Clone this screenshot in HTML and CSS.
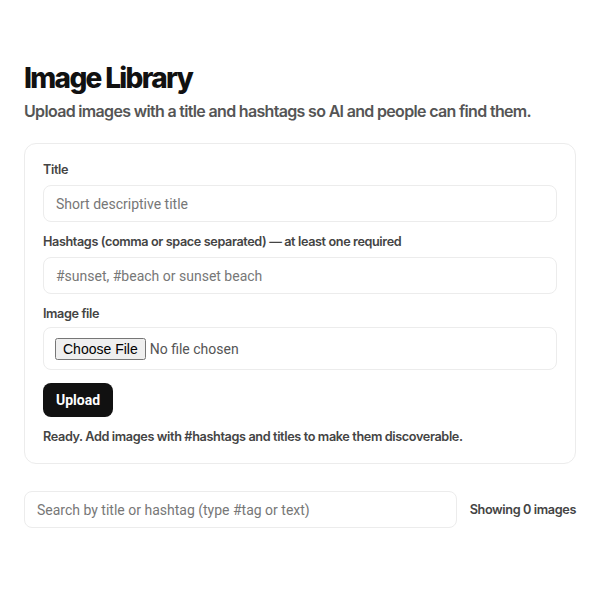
FILE: index.html
```html
<!DOCTYPE html>
<html lang="en">
<head>
<meta charset="utf-8">
<title>Image Library</title>
<link rel="stylesheet" href="styles.css">
</head>
<body>
<main class="page">
  <h1 class="title">Image Library</h1>
  <p class="subtitle">Upload images with a title and hashtags so AI and people can find them.</p>

  <form class="card">
    <div class="field">
      <label class="label" for="t">Title</label>
      <input class="input" id="t" type="text" placeholder="Short descriptive title">
    </div>
    <div class="field">
      <label class="label" for="h">Hashtags (comma or space separated) — at least one required</label>
      <input class="input" id="h" type="text" placeholder="#sunset, #beach or sunset beach">
    </div>
    <div class="field field-file">
      <label class="label" for="f">Image file</label>
      <div class="filebox"><input class="file" id="f" type="file"></div>
    </div>
    <div class="actions">
      <button class="btn" type="button">Upload</button>
    </div>
    <p class="status">Ready. Add images with #hashtags and titles to make them discoverable.</p>
  </form>

  <div class="searchrow">
    <input class="input search" type="text" placeholder="Search by title or hashtag (type #tag or text)">
    <span class="count">Showing 0 images</span>
  </div>
</main>
</body>
</html>
```

FILE: styles.css
```css
* { box-sizing: border-box; }
html, body { margin: 0; padding: 0; background: #fff; }
body {
  font-family: Inter, "Noto Sans", sans-serif;
  color: #111;
}
.page {
  padding: 61px 24px 24px 24px;
}
.title {
  margin: 0;
  font-size: 28px;
  line-height: 34px;
  font-weight: 800;
  letter-spacing: -0.06em;
  color: #111;
}
.subtitle {
  margin: 5px 0 0 0;
  font-size: 16px;
  line-height: 22px;
  font-weight: 600;
  letter-spacing: -0.042em;
  color: #555;
}
.card {
  margin-top: 21px;
  border: 1px solid #ececec;
  border-radius: 12px;
  padding: 18px;
  display: flex;
  flex-direction: column;
  gap: 12px;
}
.field {
  display: flex;
  flex-direction: column;
  gap: 7px;
}
.field-file { gap: 5px; }
.label {
  font-size: 12.65px;
  line-height: 16px;
  font-weight: 600;
  letter-spacing: -0.03em;
  color: #444;
}
.input {
  display: block;
  width: 100%;
  height: 37px;
  border: 1px solid #ececec;
  border-radius: 8px;
  padding: 0 12px;
  font-family: Roboto, sans-serif;
  font-size: 14px;
  color: #222;
  background: #fff;
  outline: none;
}
.input::placeholder { color: #777; }
.filebox {
  height: 43px;
  border: 1px solid #ececec;
  border-radius: 8px;
  padding: 0 11px;
  display: flex;
  align-items: center;
}
.file {
  font-family: Roboto, sans-serif;
  font-size: 14px;
  color: #555;
}
.actions { display: flex; margin-top: 1px; }
.btn {
  height: 34px;
  padding: 0 13px;
  border: 0;
  border-radius: 8px;
  background: #111;
  color: #fff;
  font-family: Roboto, sans-serif;
  font-size: 14px;
  font-weight: 700;
}
.status {
  margin: 0;
  font-size: 12.7px;
  line-height: 16px;
  font-weight: 600;
  letter-spacing: -0.03em;
  color: #444;
}
.searchrow {
  margin-top: 27px;
  display: flex;
  align-items: center;
  gap: 13px;
}
.search { flex: 1; }
.count {
  font-size: 12.7px;
  font-weight: 600;
  letter-spacing: -0.03em;
  color: #444;
  white-space: nowrap;
}
```
